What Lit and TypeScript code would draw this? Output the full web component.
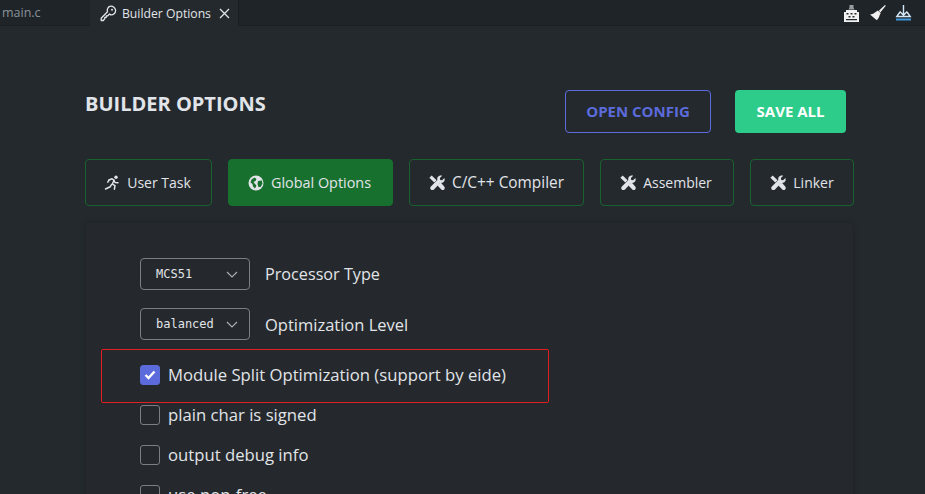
import { LitElement, html, css, svg } from "lit";
import { customElement } from "lit/decorators.js";

const wrench = svg`<svg class="ic tool" viewBox="0 0 16 16"><path fill="currentColor" d="M.4 2.800 2.700.5 7.600 5.200 5.300 7.500z"/><path fill="currentColor" d="M15.400 3c.7 2-.1 3.800-1.500 4.600-1 .5-2 .5-2.800.3L5 14.400c-.9.900-2.300.9-3.200.1-.8-.8-.8-2.200.1-3.100l6.500-6.300c-.3-1-.3-2.100.3-3.100C9.500.9 11.500.1 13.200.7L10.900 3l.3 1.900 1.900.4z"/><path fill="currentColor" d="M9.500 8.900l2.200-1.400 3.500 4c.8.900.7 2.200 0 3-.8.800-2.100.8-2.900 0L8.200 10.300z"/></svg>`;
const run = svg`<svg class="ic" viewBox="0 0 16 16"><g fill="none" stroke="currentColor" stroke-width="1.500" stroke-linecap="round" stroke-linejoin="round"><path d="M5 5 8 3.800l2 1.400-1.700 4 2.700 1.500-.6 3.500"/><path d="M7.500 9.500 6.200 11.800 1.500 14"/><path d="M10 5.500l1 2 3 .2"/><path d="M5 5 3.800 7.200"/></g><circle cx="12" cy="2.300" r="1.700" fill="currentColor"/></svg>`;
const globe = svg`<svg class="ic" viewBox="0 0 16 16"><circle cx="8" cy="8" r="7.500" fill="currentColor"/><path fill="#18702f" d="M3.500 4.500 6.500 2.500 8.500 4 7.500 6 5.500 7 7 9 8.500 10.500 7 13.500 5 11.500 4.500 9 2.500 7.500zM10 6l3.800-.5.700 3-1.700 3.200-2.200.6L9.500 9z"/></svg>`;

@customElement("app-root")
export class AppRoot extends LitElement {
  static styles = css`
    :host { display: block; width: 925px; height: 494px; overflow: hidden; position: relative; background: #24292e; color: #e1e4e8; font-family: "Open Sans", "Noto Sans", sans-serif; }
    .tabbar { display: flex; align-items: stretch; height: 26px; background: #1f2428; border-bottom: 1px solid #1b1f23; box-sizing: border-box; }
    .tab { display: flex; align-items: center; font-size: 12.200px; white-space: nowrap; }
    .tab.file { width: 90px; color: #8a929a; padding-left: 2px; box-sizing: border-box; font-size: 12.500px; }
    .tab.active { width: 149px; height: 26px; background: #24292e; color: #e1e4e8; box-sizing: border-box; padding-left: 10px; gap: 5px; border-right: 1px solid #1b1f23; }
    .tab .key { width: 17px; height: 17px; color: #e1e4e8; flex: none; }
    .tab .close { width: 11px; height: 11px; margin-left: 3px; color: #e1e4e8; flex: none; }
    .actions { margin-left: auto; display: flex; align-items: center; gap: 9px; padding-right: 13px; }
    .actions svg { width: 17px; height: 18px; display: block; }
    .main { padding: 0 72px 0 85px; }
    .head { display: flex; align-items: flex-start; height: 133px; }
    h1 { margin: 64px 0 0; font-size: 20px; line-height: 28px; font-weight: 700; color: #e1e4e8; }
    .btns { margin-left: auto; margin-top: 64px; margin-right: 7px; display: flex; gap: 24px; }
    .b { height: 43px; box-sizing: border-box; padding-bottom: 2px; border-radius: 4px; font-size: 15px; font-weight: 700; display: flex; align-items: center; justify-content: center; }
    .open { width: 146px; border: 1px solid #5c6bdc; color: #5c6bdc; }
    .save { width: 111px; background: #2ecc8a; color: #fff; }
    .tabs { display: flex; gap: 16px; }
    .opt { height: 47px; flex: none; box-sizing: border-box; border: 1px solid #18622d; border-radius: 4px; display: flex; align-items: center; justify-content: center; gap: 7px; font-size: 14px; color: #e1e4e8; white-space: nowrap; }
    .opt.sel { background: #18702f; border-color: #18702f; font-size: 14.400px; padding-right: 2px; }
    .ic { width: 16px; height: 16px; display: block; flex: none; }
    .w1 { width: 127px; padding-right: 2px; } .w2 { width: 165px; } .w3 { width: 175px; font-size: 15.400px; } .w4 { width: 134px; padding-right: 2px; } .w5 { width: 104px; }
    .card { margin: 17px 0 0 1px; height: 300px; box-sizing: border-box; background: #25292d; border-radius: 4px; box-shadow: 0 0 6px rgba(0,0,0,.18); padding: 35px 0 0 54px; }
    .row { display: flex; align-items: center; gap: 15px; font-size: 16.200px; height: 32px; margin-bottom: 18px; color: #e1e4e8; }
    .row.long { font-size: 16.500px; }
    .sel-box { width: 110px; height: 32px; box-sizing: border-box; border: 1px solid #7b7f83; border-radius: 4px; display: flex; align-items: center; padding: 0 11px 0 15px; font: 12px "DejaVu Sans Mono", "Liberation Mono", monospace; justify-content: space-between; }
    .sel-box svg { width: 12px; height: 7px; color: #a8adb2; }
    .check { display: flex; align-items: center; gap: 8px; height: 20px; margin-bottom: 20px; font-size: 16.700px; color: #e1e4e8; }
    .check span { margin-bottom: 2px; }
    .check.first { margin-top: 25px; }
    .box { width: 20px; height: 20px; box-sizing: border-box; border: 1px solid #7b7f83; border-radius: 3px; display: flex; align-items: center; justify-content: center; flex: none; }
    .box.on { background: #5c6bdc; border-color: #5c6bdc; }
    .box svg { width: 12px; height: 10px; }
    .mark { position: absolute; left: 101px; top: 349px; width: 448px; height: 54px; box-sizing: border-box; border: 1px solid #e01f1f; border-radius: 2px; pointer-events: none; }
  `;

  render() {
    const chevron = html`<svg viewBox="0 0 12 7"><path d="M1 1l5 5 5-5" fill="none" stroke="currentColor" stroke-width="1.200"/></svg>`;
    return html`
      <div class="tabbar">
        <div class="tab file">main.c</div>
        <div class="tab active">
          <svg class="key" viewBox="0 0 17 17"><path fill="none" stroke="currentColor" stroke-width="1.300" stroke-linejoin="round" d="M10.800 1.200c2.500 0 4.800 2 4.800 4.400 0 2.700-2.300 4.500-4.800 4.300L9.500 9 7.800 10.800H6.300v1.500H4.800v1.400l-1.500 1.800H1.200v-2.300l6.300-6.400C6.700 4.500 8.100 1.200 10.800 1.200z"/><circle cx="12" cy="4.700" r="1" fill="currentColor"/></svg>
          <span>Builder Options</span>
          <svg class="close" viewBox="0 0 11 11"><path d="M1 1l9 9M10 1l-9 9" stroke="currentColor" stroke-width="1.300" fill="none"/></svg>
        </div>
        <div class="actions">
          <svg viewBox="0 0 17 18"><path fill="#9a9da0" d="M6.500 1h4v2.500l1 2H5.500l1-2z"/><path fill="#f2f2f2" d="M3 6h11v2h2v10H1V8h2z"/><path fill="#24292e" d="M3.500 9h2v1.500h-2zM7.500 9h2v1.500h-2zM11.500 9h2v1.500h-2zM5.500 12h2v1.500h-2zM9.500 12h2v1.500h-2zM3 15h11v1.200H3z"/></svg>
          <svg viewBox="0 0 17 18"><path fill="#f0f0f0" d="M16 1l.8.8-5.300 6.400-1.700-1.500z"/><path fill="#f0f0f0" d="M8.800 6.500l3 2.600-1 1.700c-.5 2.200-1.500 4.200-3 5.400L1 10.500c1.800 0 4.500-1.200 6-2.800z"/></svg>
          <svg viewBox="0 0 17 18"><path fill="none" stroke="#d5e8f8" stroke-width="1.400" d="M8.500 1v10M4.800 7.500l3.700 3.700 3.700-3.700M5 8 1.800 12.500h13.400L12 8"/><path fill="#3f97dc" d="M1 14.500h15v2H1z"/></svg>
        </div>
      </div>
      <div class="main">
        <div class="head">
          <h1>BUILDER OPTIONS</h1>
          <div class="btns">
            <div class="b open">OPEN CONFIG</div>
            <div class="b save">SAVE ALL</div>
          </div>
        </div>
        <div class="tabs">
          <div class="opt w1">${run}<span>User Task</span></div>
          <div class="opt sel w2">${globe}<span>Global Options</span></div>
          <div class="opt w3">${wrench}<span>C/C++ Compiler</span></div>
          <div class="opt w4">${wrench}<span>Assembler</span></div>
          <div class="opt w5">${wrench}<span>Linker</span></div>
        </div>
        <div class="card">
          <div class="row"><div class="sel-box"><span>MCS51</span>${chevron}</div><span>Processor Type</span></div>
          <div class="row long"><div class="sel-box"><span>balanced</span>${chevron}</div><span>Optimization Level</span></div>
          <div class="check first"><div class="box on"><svg viewBox="0 0 12 10"><path d="M1.500 5l3 3 6-6.500" fill="none" stroke="#fff" stroke-width="2.400"/></svg></div><span>Module Split Optimization (support by eide)</span></div>
          <div class="check"><div class="box"></div><span>plain char is signed</span></div>
          <div class="check"><div class="box"></div><span>output debug info</span></div>
          <div class="check"><div class="box"></div><span>use non-free</span></div>
        </div>
      </div>
      <div class="mark"></div>
    `;
  }
}
